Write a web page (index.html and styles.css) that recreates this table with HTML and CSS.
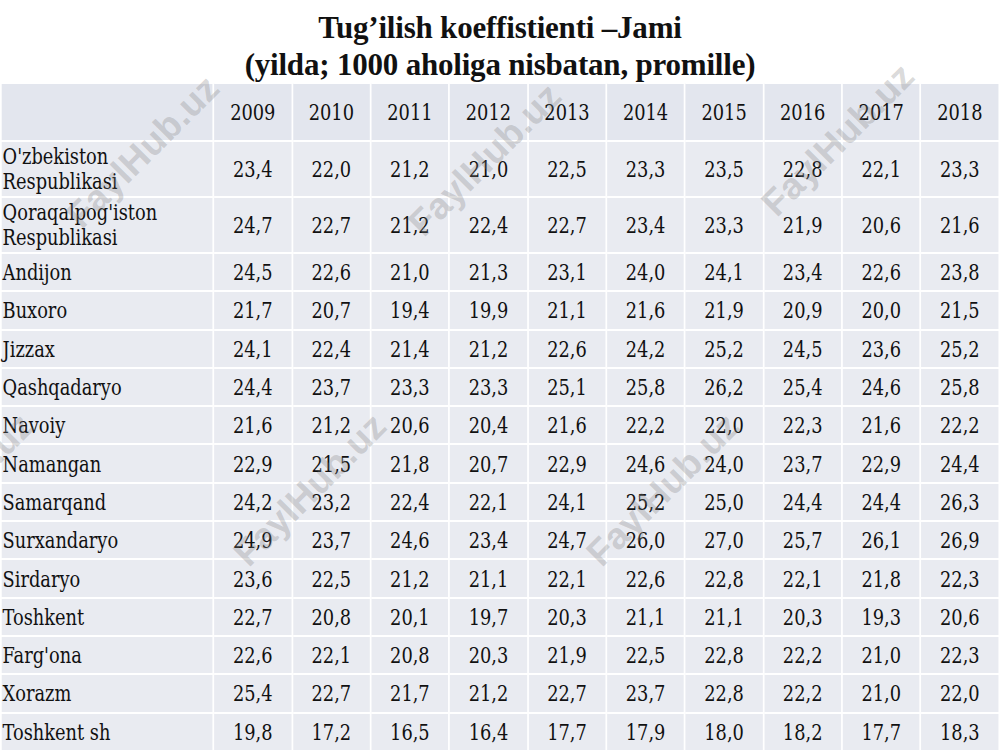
FILE: index.html
```html
<!DOCTYPE html>
<html lang="uz">
<head>
<meta charset="utf-8">
<title>Tug’ilish koeffistienti</title>
<link rel="stylesheet" href="styles.css">
</head>
<body>
<div class="page">
  <h1 class="title">
    <span class="title-line">Tug’ilish koeffistienti –Jami</span>
    <span class="title-line">(yilda; 1000 aholiga nisbatan, promille)</span>
  </h1>
  <div class="sheet">
    <table class="grid">
      <colgroup>
        <col class="c-label">
        <col class="c-year"><col class="c-year"><col class="c-year"><col class="c-year"><col class="c-year">
        <col class="c-year"><col class="c-year"><col class="c-year"><col class="c-year"><col class="c-year">
      </colgroup>
      <thead>
        <tr class="head">
          <th></th><th>2009</th><th>2010</th><th>2011</th><th>2012</th><th>2013</th><th>2014</th><th>2015</th><th>2016</th><th>2017</th><th>2018</th>
        </tr>
      </thead>
      <tbody>
        <tr class="tall"><td class="label two">O'zbekiston<br>Respublikasi</td><td>23,4</td><td>22,0</td><td>21,2</td><td>21,0</td><td>22,5</td><td>23,3</td><td>23,5</td><td>22,8</td><td>22,1</td><td>23,3</td></tr>
        <tr class="tall"><td class="label two">Qoraqalpog'iston<br>Respublikasi</td><td>24,7</td><td>22,7</td><td>21,2</td><td>22,4</td><td>22,7</td><td>23,4</td><td>23,3</td><td>21,9</td><td>20,6</td><td>21,6</td></tr>
        <tr><td class="label">Andijon</td><td>24,5</td><td>22,6</td><td>21,0</td><td>21,3</td><td>23,1</td><td>24,0</td><td>24,1</td><td>23,4</td><td>22,6</td><td>23,8</td></tr>
        <tr><td class="label">Buxoro</td><td>21,7</td><td>20,7</td><td>19,4</td><td>19,9</td><td>21,1</td><td>21,6</td><td>21,9</td><td>20,9</td><td>20,0</td><td>21,5</td></tr>
        <tr><td class="label">Jizzax</td><td>24,1</td><td>22,4</td><td>21,4</td><td>21,2</td><td>22,6</td><td>24,2</td><td>25,2</td><td>24,5</td><td>23,6</td><td>25,2</td></tr>
        <tr><td class="label">Qashqadaryo</td><td>24,4</td><td>23,7</td><td>23,3</td><td>23,3</td><td>25,1</td><td>25,8</td><td>26,2</td><td>25,4</td><td>24,6</td><td>25,8</td></tr>
        <tr><td class="label">Navoiy</td><td>21,6</td><td>21,2</td><td>20,6</td><td>20,4</td><td>21,6</td><td>22,2</td><td>22,0</td><td>22,3</td><td>21,6</td><td>22,2</td></tr>
        <tr><td class="label">Namangan</td><td>22,9</td><td>21,5</td><td>21,8</td><td>20,7</td><td>22,9</td><td>24,6</td><td>24,0</td><td>23,7</td><td>22,9</td><td>24,4</td></tr>
        <tr><td class="label">Samarqand</td><td>24,2</td><td>23,2</td><td>22,4</td><td>22,1</td><td>24,1</td><td>25,2</td><td>25,0</td><td>24,4</td><td>24,4</td><td>26,3</td></tr>
        <tr><td class="label">Surxandaryo</td><td>24,9</td><td>23,7</td><td>24,6</td><td>23,4</td><td>24,7</td><td>26,0</td><td>27,0</td><td>25,7</td><td>26,1</td><td>26,9</td></tr>
        <tr><td class="label">Sirdaryo</td><td>23,6</td><td>22,5</td><td>21,2</td><td>21,1</td><td>22,1</td><td>22,6</td><td>22,8</td><td>22,1</td><td>21,8</td><td>22,3</td></tr>
        <tr><td class="label">Toshkent</td><td>22,7</td><td>20,8</td><td>20,1</td><td>19,7</td><td>20,3</td><td>21,1</td><td>21,1</td><td>20,3</td><td>19,3</td><td>20,6</td></tr>
        <tr><td class="label">Farg'ona</td><td>22,6</td><td>22,1</td><td>20,8</td><td>20,3</td><td>21,9</td><td>22,5</td><td>22,8</td><td>22,2</td><td>21,0</td><td>22,3</td></tr>
        <tr><td class="label">Xorazm</td><td>25,4</td><td>22,7</td><td>21,7</td><td>21,2</td><td>22,7</td><td>23,7</td><td>22,8</td><td>22,2</td><td>21,0</td><td>22,0</td></tr>
        <tr><td class="label">Toshkent sh</td><td>19,8</td><td>17,2</td><td>16,5</td><td>16,4</td><td>17,7</td><td>17,9</td><td>18,0</td><td>18,2</td><td>17,7</td><td>18,3</td></tr>
      </tbody>
    </table>
  </div>
  <div class="wm wm-1">FaylHub.uz</div>
  <div class="wm wm-2">FaylHub.uz</div>
  <div class="wm wm-3">FaylHub.uz</div>
  <div class="wm wm-4">FaylHub.uz</div>
  <div class="wm wm-5">FaylHub.uz</div>
  <div class="wm wm-6">FaylHub.uz</div>
</div>
</body>
</html>
```

FILE: styles.css
```css
html, body {
  margin: 0;
  padding: 0;
  background: #ffffff;
  overflow: hidden;
}

.page {
  position: relative;
  width: 1000px;
  height: 750px;
  overflow: hidden;
}

.title {
  margin: 0;
  height: 82px;
  box-sizing: border-box;
  padding-top: 9px;
  display: flex;
  flex-direction: column;
  align-items: center;
  font-family: "Liberation Serif", "Times New Roman", serif;
  font-weight: bold;
  font-size: 31px;
  line-height: 37px;
  color: #111111;
  letter-spacing: -0.2px;
}

.title-line {
  display: block;
  white-space: nowrap;
}

.sheet {
  width: 1162.79px;
  transform: scaleX(0.86);
  transform-origin: 0 0;
}

.grid {
  width: 100%;
  table-layout: fixed;
  border-collapse: collapse;
  font-family: "DejaVu Serif Condensed", "DejaVu Serif", serif;
  font-size: 23px;
  line-height: 24px;
  color: #111111;
}

.c-label { width: 21.3%; }
.c-year { width: 7.87%; }

.grid th,
.grid td {
  border: 2px solid #ffffff;
  padding: 0;
  text-align: center;
  vertical-align: middle;
  font-weight: normal;
  background: #e9ebf1;
  white-space: nowrap;
}

.grid .head th {
  height: 56px;
  background: #e3e6ee;
}

.grid tr td {
  height: 36.3px;
}

.grid tr.tall td {
  height: 54px;
}

.grid td.label {
  text-align: left;
  padding-left: 1px;
}

.grid td.two {
  line-height: 25px;
}

.wm {
  position: absolute;
  font-family: "Liberation Sans", Arial, sans-serif;
  font-weight: bold;
  font-size: 37px;
  line-height: 40px;
  color: rgba(128, 128, 128, 0.3);
  white-space: nowrap;
  transform: translate(-50%, -50%) rotate(-45deg);
  pointer-events: none;
}

.wm-1 { left: 143px; top: 152px; }
.wm-2 { left: 485px; top: 160px; }
.wm-3 { left: 838px; top: 140px; }
.wm-4 { left: -43px; top: 490px; }
.wm-5 { left: 310px; top: 490px; }
.wm-6 { left: 663px; top: 490px; }
```
